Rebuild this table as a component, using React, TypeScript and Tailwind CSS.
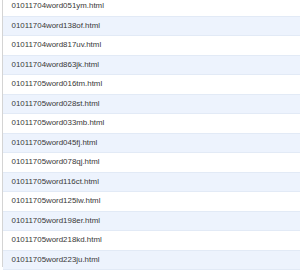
import React from 'react';

const FILES = [
  '01011704word051ym.html',
  '01011704word138of.html',
  '01011704word817uv.html',
  '01011704word863jk.html',
  '01011705word016tm.html',
  '01011705word028st.html',
  '01011705word033mb.html',
  '01011705word045fj.html',
  '01011705word078qj.html',
  '01011705word116ct.html',
  '01011705word125lw.html',
  '01011705word198er.html',
  '01011705word218kd.html',
  '01011705word223ju.html',
];

export default function App() {
  return (
    <div className="h-[270px] w-[300px] overflow-hidden bg-white pl-[2px] font-['Liberation_Sans',Arial,sans-serif]">
      <div className="h-full border-l border-[#d4d4d4]">
        <ul className="-mt-[3.5px]">
          {FILES.map((name, i) => (
            <li
              key={name}
              className={`flex h-[19.5px] items-center pl-[8.5px] text-[7.9px] text-[#383838] ${
                i % 2 === 1 ? 'border-y border-[#e2eaf6] bg-[#edf3fd]' : ''
              }`}
            >
              {name}
            </li>
          ))}
        </ul>
      </div>
    </div>
  );
}
